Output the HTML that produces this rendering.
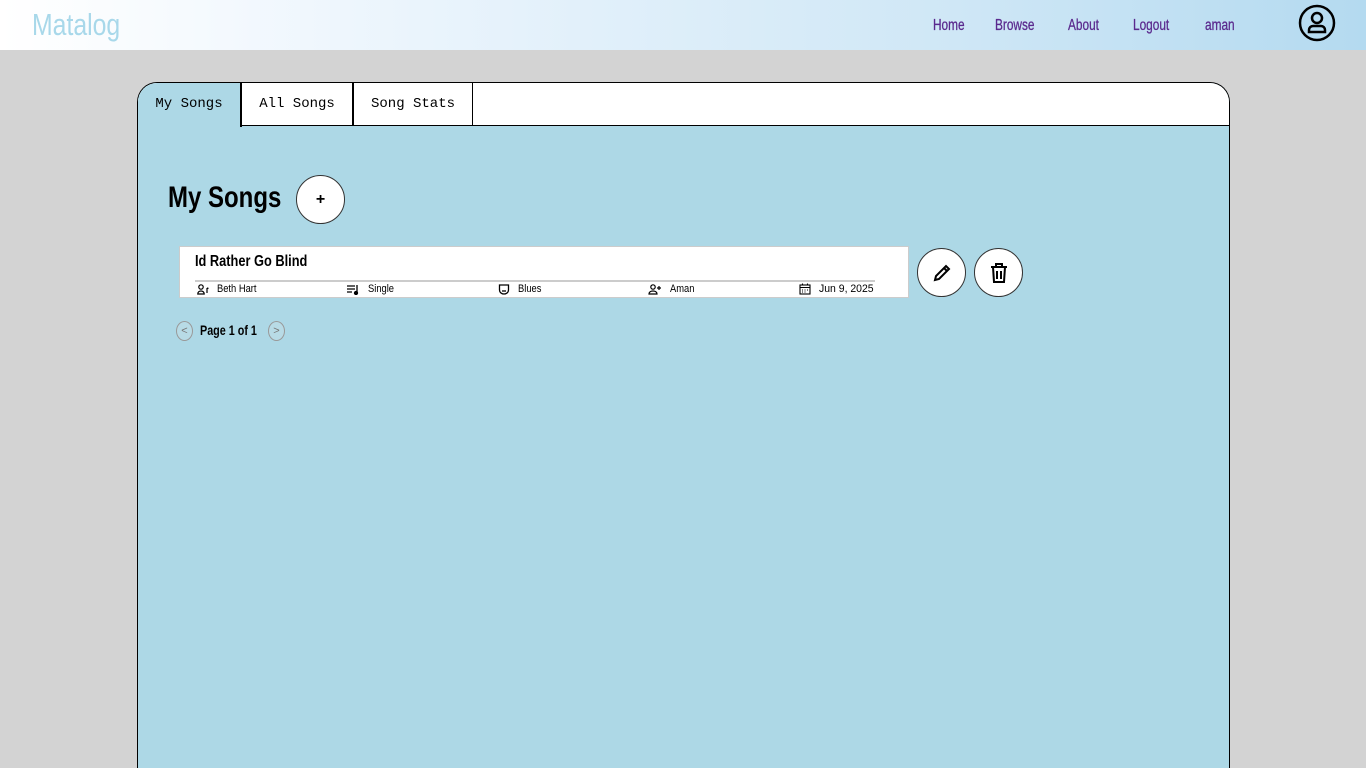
<!DOCTYPE html>
<html style="overflow:hidden"><head><style>
*{margin:0;padding:0;box-sizing:border-box}
html,body{width:1366px;height:768px;overflow:hidden}
body{background:#d3d3d3;font-family:"Liberation Sans",sans-serif;position:relative}
.n{display:inline-block;transform:scaleX(.78);transform-origin:0 50%;white-space:nowrap}
.hdr{position:absolute;left:0;top:0;width:1366px;height:50px;background:linear-gradient(90deg,#fff 0%,#eef6fd 25%,#cfe7f6 70%,#b4daf0 100%)}
.logo{position:absolute;left:32px;top:7px;font-size:31px;color:#a8d8ea}
.nav a{position:absolute;top:17px;font-size:16px;color:#5b2a8e;text-decoration:none;-webkit-text-stroke:0.3px #5b2a8e}
.panel{position:absolute;left:137px;top:82px;width:1093px;height:686px;background:#add8e6;border:1px solid #000;border-bottom:none;border-radius:20px 20px 0 0;overflow:hidden}
.tabs{position:absolute;left:0;top:0;width:100%;height:43px;background:#fff;border-bottom:1px solid #000}
.tab{position:absolute;top:0;height:42px;font-family:"Liberation Mono",monospace;font-size:14px;line-height:42px;text-align:center;border-right:2px solid #000;background:#fff}
h1{position:absolute;left:30px;top:98px;font-size:30px;font-weight:bold}
.circ{position:absolute;width:49px;height:49px;border-radius:50%;background:#fff;border:1px solid #333;display:flex;align-items:center;justify-content:center}
.card{position:absolute;left:41px;top:163px;width:730px;height:52px;background:#fff;border:1px solid #ccc}
.title{position:absolute;left:15px;top:6px;font-size:16px;font-weight:bold}
.line{position:absolute;left:15px;top:33px;width:680px;border-top:2px solid #ccc}
.meta{position:absolute;top:36px;font-size:11px;display:flex;align-items:center;gap:8px}
.pg{position:absolute;top:238px;width:17px;height:20px;border-radius:50%;border:1px solid #999;font-size:11px;color:#777;text-align:center;line-height:18px;background:#b8dbe6}
</style></head><body>
<div class="hdr">
<div class="logo"><span class="n" style="transform:scaleX(.8)">Matalog</span></div>
<div class="nav"><a style="left:933px"><span class="n" style="transform:scaleX(.74)">Home</span></a><a style="left:995px"><span class="n" style="transform:scaleX(.74)">Browse</span></a><a style="left:1068px"><span class="n" style="transform:scaleX(.74)">About</span></a><a style="left:1133px"><span class="n" style="transform:scaleX(.74)">Logout</span></a><a style="left:1205px"><span class="n" style="transform:scaleX(.74)">aman</span></a></div>
<svg style="position:absolute;left:1298px;top:4px" width="38" height="38" viewBox="0 0 38 38" fill="none" stroke="#000" stroke-width="2.5"><circle cx="19" cy="19" r="17"/><circle cx="19" cy="14" r="5"/><path d="M11 28v-2a4 4 0 0 1 4-4h8a4 4 0 0 1 4 4v2z"/></svg>
</div>
<div class="panel">
<div class="tabs">
<div class="tab" style="left:0;width:104px;background:#add8e6;height:44px">My Songs</div>
<div class="tab" style="left:104px;width:112px">All Songs</div>
<div class="tab" style="left:216px;width:119px;border-right-width:1px">Song Stats</div>
</div>
<h1><span class="n" style="transform:scaleX(.8)">My Songs</span></h1>
<div class="circ" style="left:158px;top:92px;font-size:16px;font-weight:bold">+</div>
<div class="card">
<div class="title"><span class="n" style="transform:scaleX(.8)">Id Rather Go Blind</span></div>
<div class="line"></div>
<div class="meta" style="left:17px"><svg width="12" height="11" viewBox="0 0 12 11" fill="none" stroke="#000" stroke-width="1.2"><circle cx="4" cy="3" r="2.2"/><path d="M0.8 10c0-2 1.5-3 3.2-3s3.2 1 3.2 3z"/><path d="M10 4v5M10 4l1.5 .5"/></svg><span class="n" style="transform:scaleX(.85)">Beth Hart</span></div>
<div class="meta" style="left:167px"><svg width="13" height="11" viewBox="0 0 13 11" stroke="#000" stroke-width="1.3" fill="none"><path d="M0 2h8M0 5h8M0 8h5M10 1v8"/><circle cx="9" cy="9" r="1.5" fill="#000"/></svg><span class="n" style="transform:scaleX(.85)">Single</span></div>
<div class="meta" style="left:318px"><svg width="12" height="11" viewBox="0 0 12 11" stroke="#000" stroke-width="1.3" fill="none"><path d="M1.5 1h9v5a4.5 4 0 0 1-9 0z"/><path d="M4 7h4"/></svg><span class="n" style="transform:scaleX(.85)">Blues</span></div>
<div class="meta" style="left:468px"><svg width="14" height="11" viewBox="0 0 14 11" fill="none" stroke="#000" stroke-width="1.2"><circle cx="5" cy="3" r="2.2"/><path d="M1 10c0-2 1.8-3 4-3s4 1 4 3z"/><path d="M11 2v4M9 4h4"/></svg><span class="n" style="transform:scaleX(.85)">Aman</span></div>
<div class="meta" style="left:619px"><svg width="12" height="12" viewBox="0 0 12 12" fill="none" stroke="#000" stroke-width="1.1"><rect x="1" y="2" width="10" height="9"/><path d="M1 4.5h10M3.5 0.5v2M8.5 0.5v2M3 7h1M5.5 7h1M8 7h1M3 9h1M5.5 9h1"/></svg><span class="n" style="transform:scaleX(.95)">Jun 9, 2025</span></div>
</div>
<div class="circ" style="left:779px;top:165px"><svg width="20" height="20" viewBox="0 0 20 20" fill="none" stroke="#000" stroke-width="2"><path d="M3 17l1-4L14 3l3 3L7 16z"/><path d="M12 5l3 3"/></svg></div>
<div class="circ" style="left:836px;top:165px"><svg width="18" height="20" viewBox="0 0 18 20" fill="none" stroke="#000" stroke-width="2"><path d="M1 4h16M6 4V1h6v3M3 4l1 15h10l1-15M7 8v8M11 8v8"/></svg></div>
<div class="pg" style="left:38px">&lt;</div>
<div style="position:absolute;left:62px;top:239px;font-size:14px;font-weight:bold"><span class="n" style="transform:scaleX(.77)">Page 1 of 1</span></div>
<div class="pg" style="left:130px">&gt;</div>
</div>
</body></html>
